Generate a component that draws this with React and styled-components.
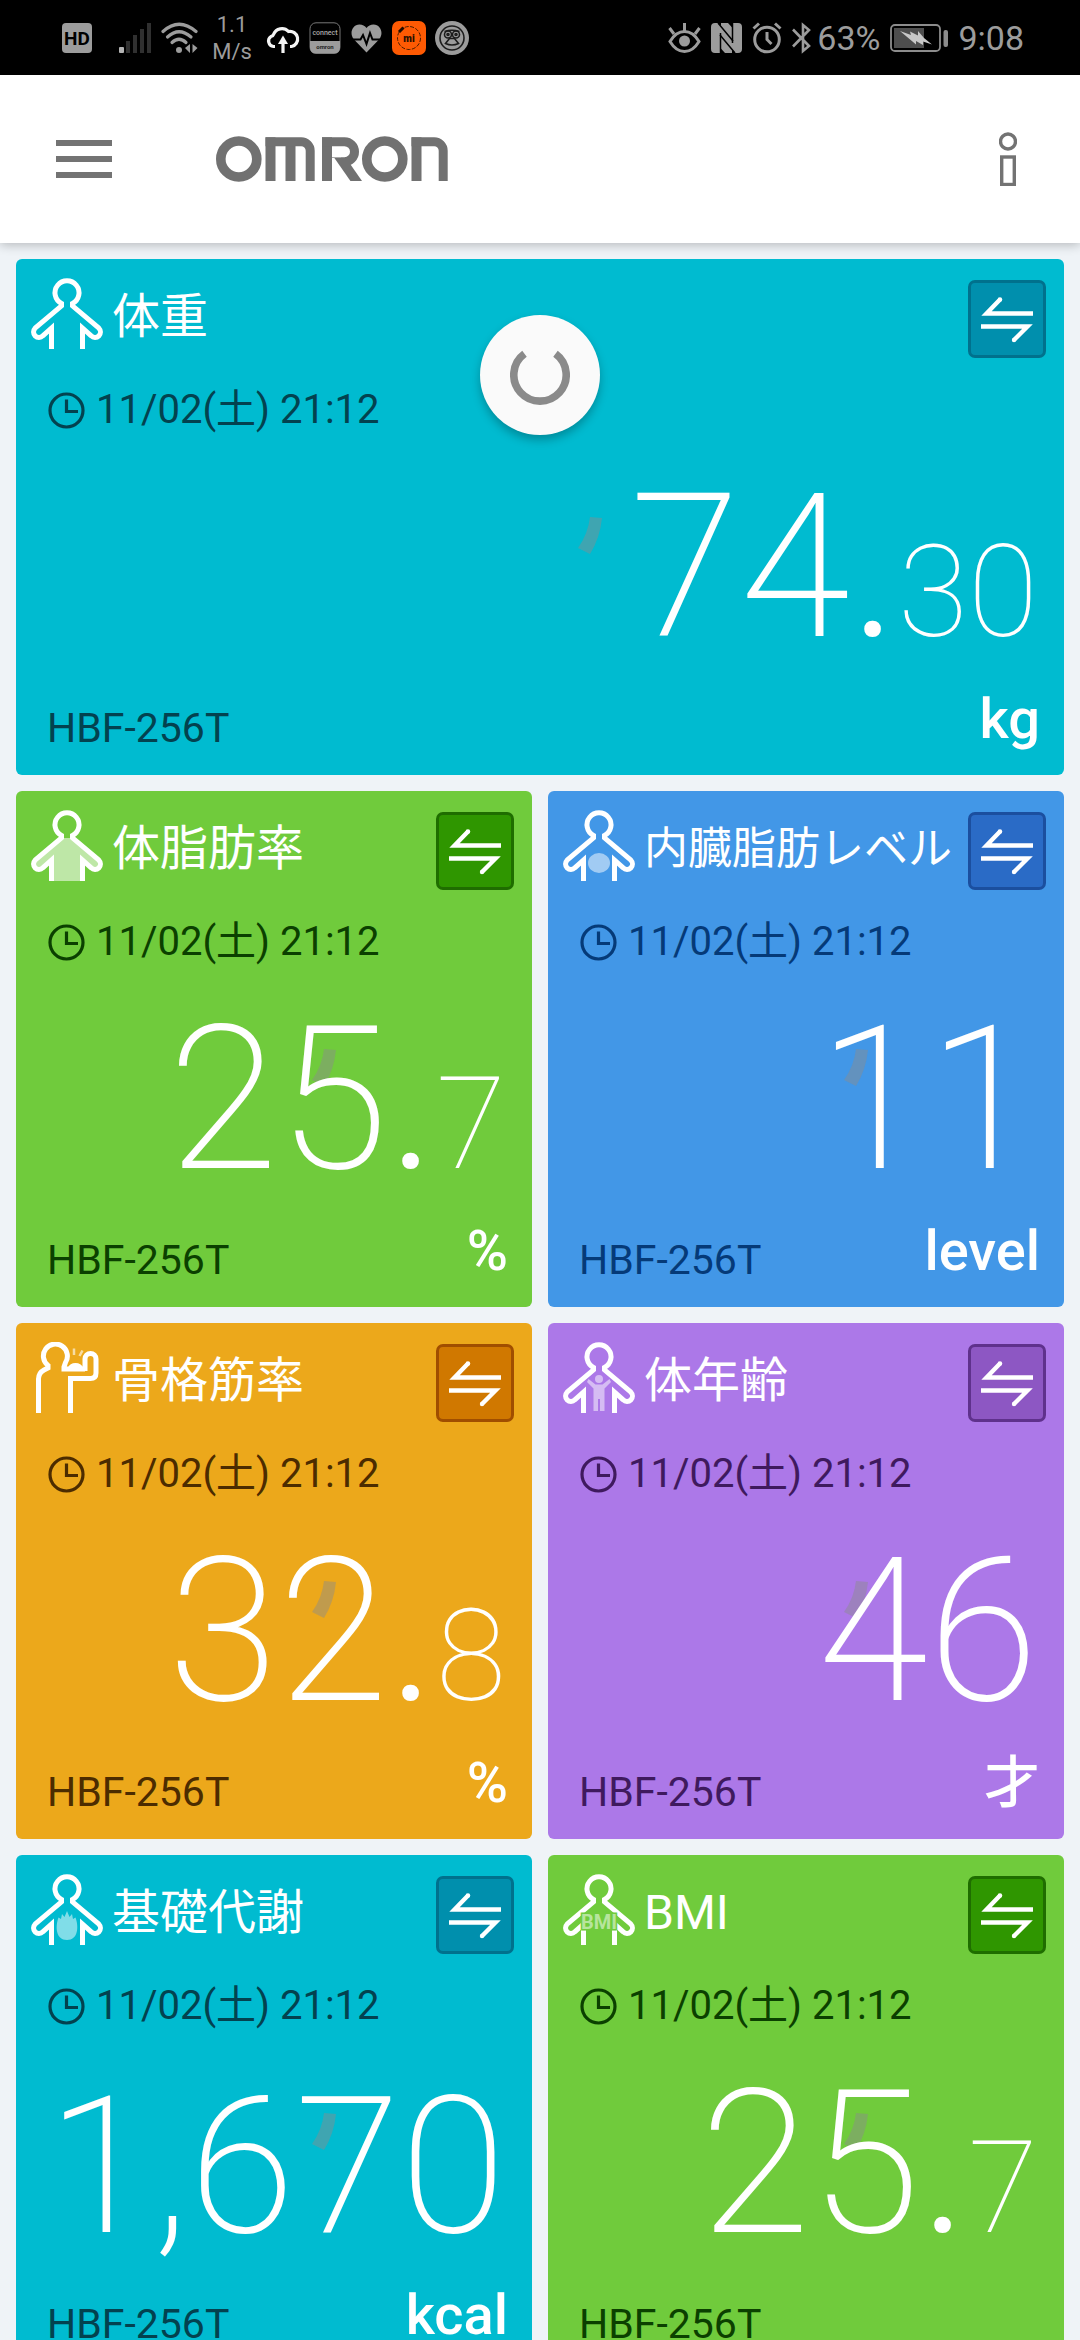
import React from "react";
import styled, { createGlobalStyle, ThemeProvider } from "styled-components";

const GlobalStyle = createGlobalStyle`
  * { box-sizing: border-box; }
  body { margin: 0; background: #eff3f7; }
  button { font: inherit; border: 0; padding: 0; background: none; cursor: pointer; }
`;

const theme = {
  font: 'Roboto, "Noto Sans CJK JP", sans-serif',
  tones: {
    teal: { base: "#00bbd0", ink: "#03424f", button: "#008fad", edge: "#00718d" },
    green: { base: "#70cb3c", ink: "#0b4000", button: "#2f9600", edge: "#1f6d00" },
    blue: { base: "#4297e7", ink: "#053a78", button: "#2a6bc6", edge: "#1b4f9f" },
    orange: { base: "#eca81b", ink: "#4c2c00", button: "#d07800", edge: "#a04e00" },
    purple: { base: "#ac78e8", ink: "#3f1a5e", button: "#8d57c3", edge: "#5f318c" },
  },
};

const Screen = styled.div`
  display: flex;
  flex-direction: column;
  height: 100vh;
  overflow: hidden;
  font-family: ${({ theme }) => theme.font};
`;

/* ---------- Status bar ---------- */

const StatusBar = styled.div`
  display: flex;
  flex: none;
  align-items: center;
  justify-content: space-between;
  height: 75px;
  padding: 0 56px 0 62px;
  background: #000;
  color: #9c9c9c;
`;

const StatusGroup = styled.div`
  display: flex;
  align-items: center;
  gap: ${({ $gap }) => $gap}px;
`;

const StatusText = styled.span`
  font-size: 34px;
  line-height: 40px;
`;

const Speed = styled.div`
  width: 50px;
  font-size: 22px;
  line-height: 27px;
  text-align: center;
`;

const HdIcon = () => (
  <svg width="30" height="32" viewBox="0 0 30 32">
    <rect y="1" width="30" height="30" rx="4" fill="#9c9c9c" />
    <text x="15" y="23" textAnchor="middle" fontFamily="Roboto, sans-serif" fontWeight="700" fontSize="19" fill="#000">HD</text>
  </svg>
);

const SignalIcon = () => (
  <svg width="51" height="32" viewBox="0 0 51 32">
    <rect x="18" y="25" width="5" height="6" rx="1" fill="#b4b4b4" />
    <g fill="#303030">
      <rect x="25" y="19" width="4" height="12" />
      <rect x="32" y="13" width="4" height="18" />
      <rect x="39" y="7" width="4" height="24" />
      <rect x="46" y="1" width="4" height="30" />
    </g>
  </svg>
);

const WifiIcon = () => (
  <svg width="37" height="32" viewBox="0 0 37 32" fill="none" stroke="#9c9c9c" strokeWidth="3.2" strokeLinecap="round">
    <path d="M2 9.5Q18 -5 35 9.5" />
    <path d="M6.5 15Q18 4.500 30 15" />
    <path d="M11 20.500Q18 14 25 20.500" />
    <circle cx="18" cy="28" r="3" fill="#9c9c9c" stroke="none" />
    <path d="M29 22v9l-5-5zM31.500 22v9l5-5z" fill="#9c9c9c" stroke="none" />
  </svg>
);

const CloudIcon = () => (
  <svg width="34" height="32" viewBox="0 0 34 32" fill="none" stroke="#f4f4f4" strokeWidth="3.200">
    <path d="M9 24.500H7.500A5.500 5.500 0 0 1 5 14.500Q7 14 7.500 12.500A9 9 0 0 1 22.500 9.500A7.600 7.600 0 1 1 25.500 24.500H24" />
    <path d="M17 31V20" />
    <path d="M17 13.500L22 22H12z" fill="#f4f4f4" stroke="none" />
  </svg>
);

const ConnectIcon = () => (
  <svg width="32" height="32" viewBox="0 0 32 32">
    <rect x="1" y="0.800" width="30" height="30.500" rx="6" fill="#000" stroke="#777" />
    <path d="M1 19H31V25.500Q31 31.500 25 31.500H7Q1 31.500 1 25.500Z" fill="#9c9c9c" />
    <text x="16" y="13" textAnchor="middle" fontFamily="Roboto, sans-serif" fontWeight="500" fontSize="7" fill="#aaa">connect</text>
    <text x="16" y="27" textAnchor="middle" fontFamily="Roboto, sans-serif" fontWeight="700" fontSize="6" fill="#222">omron</text>
  </svg>
);

const HeartIcon = () => (
  <svg width="33" height="32" viewBox="0 0 33 32">
    <path d="M16.500 30.500L4 17.500C-1 12 2 2.500 9.500 2.500Q14 2.500 16.500 6Q19 2.500 23.500 2.500C31 2.500 34 12 29 17.500Z" fill="#9c9c9c" />
    <path d="M1 17.500H10.500L13 13L16.500 22L20 11L22.500 17.500H32" fill="none" stroke="#000" strokeWidth="2" />
  </svg>
);

const MiIcon = () => (
  <svg width="34" height="34" viewBox="0 0 34 34">
    <rect width="34" height="34" rx="7" fill="#fe5a03" />
    <circle cx="17" cy="17" r="11.500" fill="none" stroke="#4c1c00" strokeDasharray="4 1.500" />
    <path d="M7 11L11.500 6.500" stroke="#200c00" strokeWidth="3" />
    <text x="17" y="20.500" textAnchor="middle" fontFamily="Roboto, sans-serif" fontWeight="900" fontSize="10" fill="#2a0f00">mi</text>
  </svg>
);

const FaceIcon = () => (
  <svg width="34" height="34" viewBox="0 0 34 34" fill="none" stroke="#1c1c1c" strokeWidth="1.600">
    <circle cx="17" cy="17" r="17" fill="#9c9c9c" stroke="none" />
    <circle cx="17" cy="17" r="12" />
    <circle cx="13" cy="13.500" r="3.500" />
    <circle cx="21" cy="13.500" r="3.500" />
    <path d="M9.500 10.500Q17 8 24.500 10.500M14.500 17.500L10.500 22.500Q17 25.500 23.500 22.500L19.500 17.500Z" />
    <circle cx="13" cy="13.500" r="1" />
    <circle cx="21" cy="13.500" r="1" />
  </svg>
);

const EyeIcon = () => (
  <svg width="33" height="32" viewBox="0 0 33 32" fill="none" stroke="#9c9c9c" strokeWidth="3">
    <path d="M2 19.500Q8 9.500 16.500 9.500T31 19.500Q25 29.500 16.500 29.500T2 19.500Z" />
    <circle cx="16.500" cy="19" r="5.500" fill="#9c9c9c" stroke="none" />
    <path d="M16.500 1V9M1.500 6L6 12M31.500 6L27 12" />
  </svg>
);

const NfcIcon = () => (
  <svg width="31" height="32" viewBox="0 0 31 32" fill="#9c9c9c">
    <path d="M4 1H7L21 17V31H14L9 25.500V31H4Q0 31 0 27V5Q0 1 4 1Z" />
    <path d="M27 31H24L10 15V1H17L22 6.500V1H27Q31 1 31 5V27Q31 31 27 31Z" />
    <path d="M9.500 11V31M21.500 1V21" stroke="#000" strokeWidth="1.500" />
    <path d="M7 1L22 19M9 13L24 31" stroke="#000" strokeWidth="1.500" />
  </svg>
);

const AlarmIcon = () => (
  <svg width="30" height="32" viewBox="0 0 30 32" fill="none" stroke="#9c9c9c" strokeWidth="3">
    <circle cx="15" cy="17.500" r="12.300" />
    <path d="M1.500 6.500L7 1.500M28.500 6.500L23 1.500M15 10V17.500L19.500 22" />
  </svg>
);

const BluetoothIcon = () => (
  <svg width="19" height="32" viewBox="0 0 19 32" fill="none" stroke="#9c9c9c" strokeWidth="2.600">
    <path d="M1 7.500L17 24L11 29V3L17 8L1 24.500" />
  </svg>
);

const BatteryIcon = () => (
  <svg width="58" height="28" viewBox="0 0 58 28">
    <rect x="1" y="1" width="49" height="26" rx="4" fill="none" stroke="#8c8c8c" strokeWidth="1.800" />
    <rect x="4" y="4" width="30" height="20" fill="#4e4e4e" />
    <path d="M10 7L21 11L20 7.500L28 11.500V7L34 14L42 20.500L33 17.500V21L26 17V20.500Z" fill="#c8c8c8" />
    <rect x="53.500" y="6" width="4.500" height="17" rx="2" fill="#8c8c8c" />
  </svg>
);

/* ---------- App header ---------- */

const AppHeader = styled.header`
  display: flex;
  flex: none;
  align-items: center;
  height: 168px;
  padding: 0 63px 0 56px;
  background: #fff;
  box-shadow: 0 2px 10px rgba(0, 0, 0, 0.24);
  z-index: 1;
`;

const IconButton = styled.button`
  display: flex;
  align-items: center;
  justify-content: center;
`;

const Brand = styled.div`
  display: flex;
  flex: 1;
  padding-left: 104px;
`;

const MenuIcon = () => (
  <svg width="56" height="38" viewBox="0 0 56 38" fill="#737373">
    <rect width="56" height="6" />
    <rect y="16" width="56" height="6" />
    <rect y="32" width="56" height="6" />
  </svg>
);

const InfoIcon = () => (
  <svg width="18" height="54" viewBox="0 0 18 54" fill="none" stroke="#737373" strokeWidth="3.400">
    <circle cx="9" cy="9.500" r="7.500" />
    <rect x="2.700" y="25" width="12.600" height="27.500" />
  </svg>
);

const OmronLogo = () => (
  <svg width="233" height="46" viewBox="0 0 233 46" role="img" aria-label="OMRON" fill="#717171" stroke="none">
    <circle cx="22.800" cy="23" r="18" fill="none" stroke="#717171" strokeWidth="9.600" />
    <rect x="49.500" y="1.300" width="10" height="43.700" />
    <rect x="69.500" y="5" width="10" height="40" />
    <svg x="49.500" y="0" width="50" height="45">
      <rect x="-30" y="5.700" width="74.700" height="80" rx="9" fill="none" stroke="#717171" strokeWidth="9" />
    </svg>
    <rect x="106" y="1.300" width="10" height="43.700" />
    <svg x="106" y="0" width="38" height="29">
      <rect x="-30" y="5.700" width="62.500" height="20" rx="10" fill="none" stroke="#717171" strokeWidth="9" />
      <rect x="10" y="21.800" width="9" height="10" fill="#fff" />
    </svg>
    <svg x="116" y="22" width="34" height="23">
      <line x1="4" y1="-6" x2="27" y2="27" stroke="#717171" strokeWidth="9.500" />
    </svg>
    <circle cx="168.800" cy="23" r="18" fill="none" stroke="#717171" strokeWidth="9.600" />
    <rect x="195.500" y="1.300" width="10" height="43.700" />
    <svg x="195.500" y="0" width="38" height="45">
      <rect x="-30" y="5.700" width="61.700" height="80" rx="9" fill="none" stroke="#717171" strokeWidth="9" />
    </svg>
  </svg>
);

/* ---------- Measurement cards ---------- */

const Content = styled.main`
  flex: 1;
  overflow-y: auto;
  scrollbar-width: none;
  position: relative;
`;

const CardGrid = styled.div`
  display: grid;
  grid-template-columns: repeat(2, minmax(0, 1fr));
  gap: 16px;
  padding: 16px;
`;

const Card = styled.section`
  position: relative;
  display: flex;
  flex-direction: column;
  min-height: 516px;
  grid-column: ${({ $wide }) => ($wide ? "1 / -1" : "auto")};
  border-radius: 6px;
  background: ${({ theme, $tone }) => theme.tones[$tone].base};
  color: #fff;
`;

const CardHeader = styled.div`
  display: flex;
  align-items: flex-start;
  height: 99px;
  padding: 19px 18px 0 15px;
`;

const CardTitle = styled.h2`
  flex: 1;
  margin: 0;
  padding-left: 9px;
  font-size: ${({ $compact }) => ($compact ? 44 : 48)}px;
  font-weight: 400;
  line-height: 78px;
  white-space: nowrap;
`;

const SwapButton = styled.button`
  display: flex;
  align-items: center;
  justify-content: center;
  width: 78px;
  height: 78px;
  margin-top: 2px;
  border: 3px solid ${({ theme, $tone }) => theme.tones[$tone].edge};
  border-radius: 7px;
  background: ${({ theme, $tone }) => theme.tones[$tone].button};
`;

const Measured = styled.div`
  display: flex;
  align-items: center;
  gap: 11px;
  padding: 28px 32px 0;
  color: ${({ theme, $tone }) => theme.tones[$tone].ink};
  font-size: 40px;
  line-height: 48px;
  white-space: nowrap;
`;

const Value = styled.div`
  position: relative;
  padding-right: 26px;
  margin-top: 34px;
  font-size: 200px;
  font-weight: 200;
  line-height: 200px;
  text-align: right;
  white-space: nowrap;
`;

const Whole = styled.span`
  font-size: ${({ $compact }) => ($compact ? 192 : 200)}px;
  line-height: 1;
`;

const Point = styled.span`
  font-weight: 300;
  line-height: 1;
`;

const Fraction = styled.span`
  font-size: 128px;
  font-weight: 100;
  line-height: 1;
`;

const CardFooter = styled.div`
  display: flex;
  align-items: flex-end;
  justify-content: space-between;
  margin-top: auto;
  padding: 0 24px 24px 31px;
`;

const Device = styled.span`
  color: ${({ theme, $tone }) => theme.tones[$tone].ink};
  font-size: 41px;
  line-height: 46px;
`;

const Unit = styled.span`
  font-size: 56px;
  font-weight: 500;
  line-height: 64px;
`;

const GhostMark = styled.svg`
  position: absolute;
  top: 258px;
  left: calc(50% + 38px);
  width: 24px;
  height: 37px;
`;

const Refresh = styled.div`
  position: absolute;
  top: 72px;
  left: 50%;
  display: flex;
  align-items: center;
  justify-content: center;
  width: 120px;
  height: 120px;
  margin-left: -60px;
  border-radius: 50%;
  background: #fafafa;
  box-shadow: 0 5px 10px rgba(0, 0, 0, 0.26);
`;

const ClockIcon = () => (
  <svg width="37" height="37" viewBox="0 0 37 37" fill="none" stroke="currentColor" strokeWidth="3.200">
    <circle cx="18.500" cy="18.500" r="16.500" />
    <path d="M18.500 7.500V19.500H30" />
  </svg>
);

const SwapIcon = () => (
  <svg width="54" height="50" viewBox="0 0 54 50" fill="none" stroke="#fff" strokeWidth="4.400">
    <path d="M53 19.500H6.500L20.500 5" />
    <path d="M1 32.500H47.500L34 46" />
    <circle cx="20" cy="5.500" r="2.200" fill="#fff" stroke="none" />
    <circle cx="34" cy="46" r="2.200" fill="#fff" stroke="none" />
  </svg>
);

const BODY =
  "M20.500 71V50L11.800 57.800A5.400 5.400 0 0 1 4.100 50.200L30.500 27.800V25.500A12 12 0 1 1 41.500 25.500V27.800L67.900 50.200A5.400 5.400 0 0 1 60.200 57.800L51.500 50V71";

const marks = {
  weight: null,
  fat: (
    <path
      d="M20.500 71V50L11.800 57.800A5.400 5.400 0 0 1 4.100 50.200L30.500 28H41.500L67.900 50.200A5.400 5.400 0 0 1 60.200 57.800L51.500 50V71Z"
      fill="#fff"
      opacity="0.55"
    />
  ),
  visceral: <ellipse cx="36" cy="53" rx="11" ry="10" fill="#fff" opacity="0.5" />,
  age: (
    <g fill="#fff" opacity="0.5">
      <circle cx="36" cy="37" r="4" />
      <path d="M25.500 37L32.500 42.500H39.500L46.500 37L48 40L41.500 46.500V69H37V57H35V69H30.500V46.500L24 40Z" />
    </g>
  ),
  flame: (
    <path
      d="M36 37L38.500 43L41 40L42 45L44.500 43.500C48 53 47 66 36 66S24 53 27.500 43.500L30 45L31 40L33.500 43Z"
      fill="#fff"
      opacity="0.5"
    />
  ),
};

const BodyIcon = ({ kind, base }) => (
  <svg width="72" height="72" viewBox="0 0 72 72" fill="none" stroke="none">
    {kind === "muscle" ? (
      <g stroke="#fff" strokeWidth="5">
        <path d="M7.500 71V37Q7.500 31 13 28L17 26V23.500A12 12 0 1 1 34.500 20.500L33 25V27H54" />
        <path d="M39 27A6 6 0 0 1 50 27" />
        <path d="M54 29V17A5.500 5.500 0 0 1 65 17V31Q65 36.500 59.500 36.500H39.500V71" />
        <path d="M43 6.500V13M51.500 8.500L48.500 14" strokeWidth="2.500" opacity="0.6" />
      </g>
    ) : (
      <>
        {marks[kind]}
        <path d={BODY} stroke="#fff" strokeWidth="5" />
        {kind === "bmi" && (
          <text
            x="36"
            y="54.500"
            textAnchor="middle"
            fontFamily="Roboto, sans-serif"
            fontSize="20"
            fontWeight="700"
            fill="#b7e59d"
            stroke={base}
            strokeWidth="3"
            paintOrder="stroke"
          >
            BMI
          </text>
        )}
      </>
    )}
  </svg>
);

const SpinnerIcon = () => (
  <svg width="60" height="60" viewBox="0 0 60 60" fill="none" stroke="#8a8a8a" strokeWidth="7.600">
    <path d="M14.500 8.800A26.200 26.200 0 1 0 45.500 8.800" />
  </svg>
);

const metrics = [
  { title: "体重", icon: "weight", tone: "teal", whole: "74", fraction: "30", unit: "kg", wide: true },
  { title: "体脂肪率", icon: "fat", tone: "green", whole: "25", fraction: "7", unit: "%" },
  { title: "内臓脂肪レベル", icon: "visceral", tone: "blue", whole: "11", unit: "level", compactTitle: true },
  { title: "骨格筋率", icon: "muscle", tone: "orange", whole: "32", fraction: "8", unit: "%" },
  { title: "体年齢", icon: "age", tone: "purple", whole: "46", unit: "才" },
  { title: "基礎代謝", icon: "flame", tone: "teal", whole: "1,670", unit: "kcal", compactValue: true },
  { title: "BMI", icon: "bmi", tone: "green", whole: "25", fraction: "7", unit: "" },
];

const MetricCard = ({ metric }) => {
  const { title, icon, tone, whole, fraction, unit, wide, compactTitle, compactValue } = metric;
  return (
    <Card $tone={tone} $wide={wide}>
      <GhostMark viewBox="0 0 24 37" aria-hidden="true">
        <path d="M12 0L24 1Q22 21 12 37L0 31Q10 17 12 0Z" fill="#8c8c8c" opacity="0.45" />
      </GhostMark>
      <CardHeader>
        <BodyIcon kind={icon} base={theme.tones[tone].base} />
        <CardTitle $compact={compactTitle}>{title}</CardTitle>
        <SwapButton $tone={tone} type="button" aria-label={`${title} 切り替え`}>
          <SwapIcon />
        </SwapButton>
      </CardHeader>
      <Measured $tone={tone}>
        <ClockIcon />
        <time>11/02(土) 21:12</time>
      </Measured>
      <Value>
        <Whole $compact={compactValue}>{whole}</Whole>
        {fraction && (
          <>
            <Point>.</Point>
            <Fraction>{fraction}</Fraction>
          </>
        )}
      </Value>
      <CardFooter>
        <Device $tone={tone}>HBF-256T</Device>
        {unit && <Unit>{unit}</Unit>}
      </CardFooter>
    </Card>
  );
};

export default function App() {
  return (
    <ThemeProvider theme={theme}>
      <GlobalStyle />
      <Screen>
        <StatusBar>
          <StatusGroup $gap={9}>
            <HdIcon />
            <SignalIcon />
            <WifiIcon />
            <Speed>1.1 M/s</Speed>
            <CloudIcon />
            <ConnectIcon />
            <HeartIcon />
            <MiIcon />
            <FaceIcon />
          </StatusGroup>
          <StatusGroup $gap={10}>
            <EyeIcon />
            <NfcIcon />
            <AlarmIcon />
            <StatusGroup $gap={6}>
              <BluetoothIcon />
              <StatusText>63%</StatusText>
            </StatusGroup>
            <BatteryIcon />
            <StatusText>9:08</StatusText>
          </StatusGroup>
        </StatusBar>
        <AppHeader>
          <IconButton type="button" aria-label="メニュー">
            <MenuIcon />
          </IconButton>
          <Brand>
            <OmronLogo />
          </Brand>
          <IconButton type="button" aria-label="情報">
            <InfoIcon />
          </IconButton>
        </AppHeader>
        <Content>
          <CardGrid>
            {metrics.map((metric) => (
              <MetricCard key={metric.title} metric={metric} />
            ))}
          </CardGrid>
          <Refresh role="status" aria-label="更新中">
            <SpinnerIcon />
          </Refresh>
        </Content>
      </Screen>
    </ThemeProvider>
  );
}
